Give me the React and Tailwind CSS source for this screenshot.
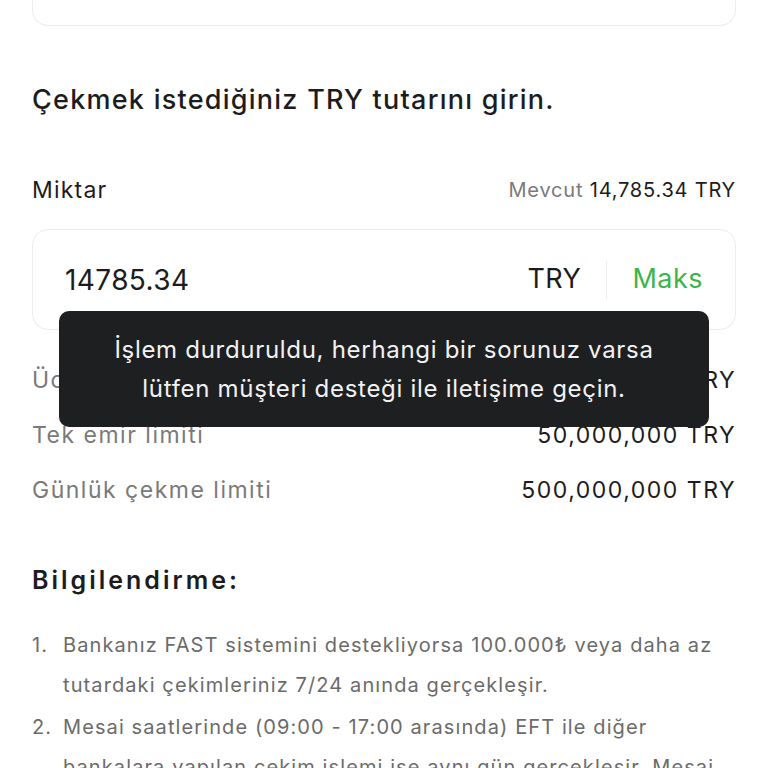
import React from 'react';

const limits = [
  { label: 'Ücret', value: '0 TRY' },
  { label: 'Tek emir limiti', value: '50,000,000 TRY' },
  { label: 'Günlük çekme limiti', value: '500,000,000 TRY' },
];

const notes = [
  'Bankanız FAST sistemini destekliyorsa 100.000₺ veya daha az tutardaki çekimleriniz 7/24 anında gerçekleşir.',
  'Mesai saatlerinde (09:00 - 17:00 arasında) EFT ile diğer bankalara yapılan çekim işlemi ise aynı gün gerçekleşir. Mesai saatleri dışında yapılan işlemler ertesi iş günü gerçekleşir.',
];

export default function App() {
  return (
    <div className="relative h-[768px] overflow-hidden bg-white px-8 font-['Inter',sans-serif] text-[#1c1c1e]">
      {/* Previous card (cut off) */}
      <div className="h-[26px] rounded-b-2xl border border-t-0 border-[#ececec]" />

      <h1 className="mt-[56px] text-[27px] font-medium leading-[36px] tracking-[1.25px]">
        Çekmek istediğiniz TRY tutarını girin.
      </h1>

      <div className="mt-[57px] flex items-center justify-between leading-[30px]">
        <span className="text-[23px] tracking-[1.2px]">Miktar</span>
        <span className="text-[20px] tracking-[0.8px]">
          <span className="text-[#7a7a7a]">Mevcut</span> 14,785.34 TRY
        </span>
      </div>

      <div className="mt-[24px] flex h-[101px] items-center rounded-2xl border border-[#ececec] pl-8 pr-[32px]">
        <span className="flex-1 text-[28px] tracking-[0.4px]">14785.34</span>
        <span className="text-[27px] tracking-[0.5px]">TRY</span>
        <span className="mx-[25px] h-[38px] w-px bg-[#eeeeee]" />
        <span className="text-[27px] tracking-[0.5px] text-[#3bb54a]">Maks</span>
      </div>

      <div className="mt-[35px] flex flex-col gap-[25px]">
        {limits.map((row) => (
          <div key={row.label} className="flex items-center justify-between text-[23px] leading-[30px] tracking-[1.5px]">
            <span className="text-[#7a7a7a]">{row.label}</span>
            <span>{row.value}</span>
          </div>
        ))}
      </div>

      <h2 className="mt-[58px] text-[25px] font-semibold leading-[34px] tracking-[3px]">Bilgilendirme:</h2>

      <ol className="mt-[28px] flex flex-col gap-[2px] text-[20px] leading-[40px] tracking-[1.1px] text-[#6b6b6b]">
        {notes.map((note, i) => (
          <li key={i} className="flex">
            <span className="w-[31px] shrink-0">{i + 1}.</span>
            <span>{note}</span>
          </li>
        ))}
      </ol>

      {/* Toast */}
      <div className="absolute left-[59px] top-[311px] flex h-[116px] w-[650px] items-center justify-center rounded-[10px] bg-[#1e1f21] text-center text-[24px] leading-[39px] tracking-[0.7px] text-[#f2f2f2]">
        <p>
          İşlem durduruldu, herhangi bir sorunuz varsa
          <br />
          lütfen müşteri desteği ile iletişime geçin.
        </p>
      </div>
    </div>
  );
}
